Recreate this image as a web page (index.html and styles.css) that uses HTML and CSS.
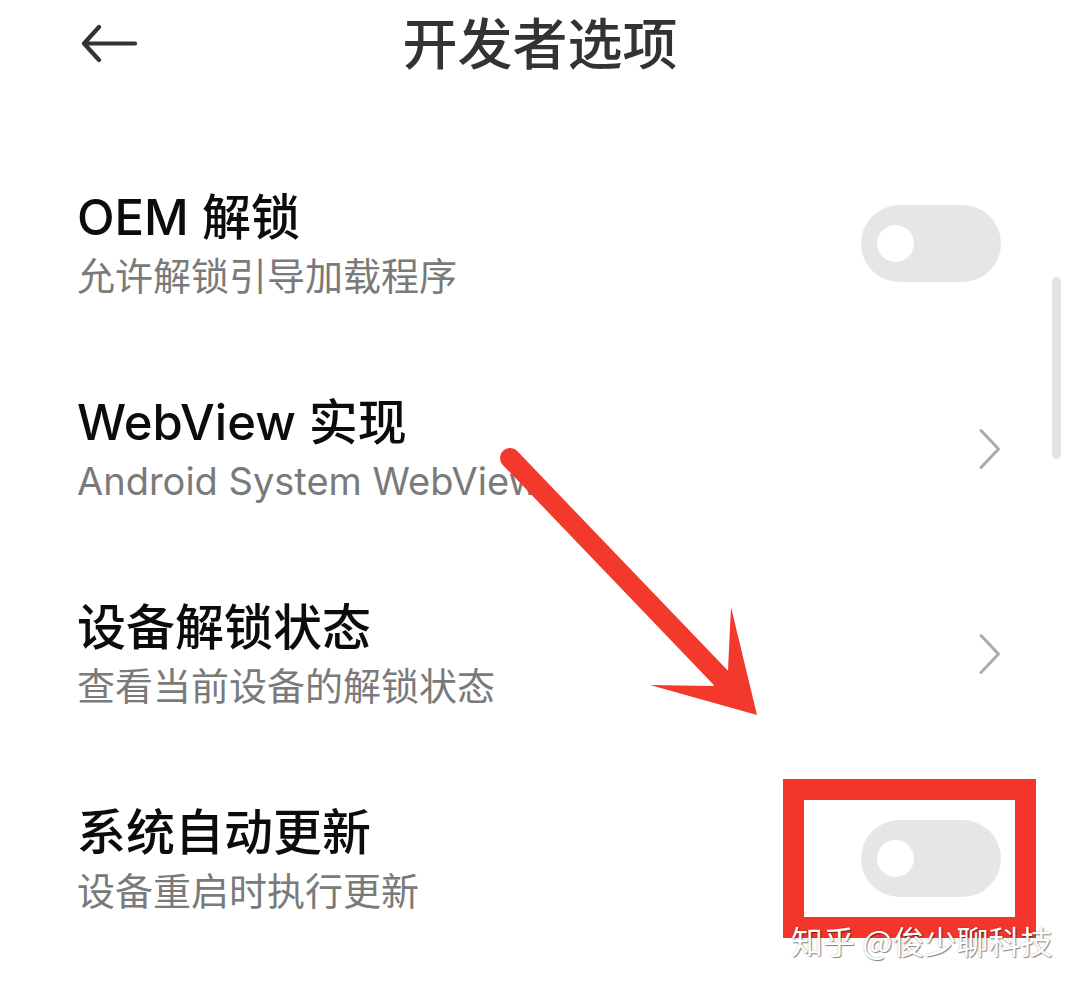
FILE: index.html
```html
<!DOCTYPE html>
<html lang="zh-CN">
<head>
<meta charset="utf-8">
<title>开发者选项</title>
<link rel="stylesheet" href="styles.css">
</head>
<body>
<div class="screen">
  <header class="topbar">
    <div class="topbar-side">
      <button class="back" aria-label="返回">
        <svg width="56" height="40" viewBox="0 0 56 40">
          <path d="M18 3 L3 19.5 L18 36 M3 19.5 H54" fill="none" stroke="#333" stroke-width="4.2" stroke-linecap="round" stroke-linejoin="round"/>
        </svg>
      </button>
    </div>
    <h1 class="topbar-title">开发者选项</h1>
    <div class="topbar-side"></div>
  </header>

  <ul class="settings">
    <li class="row">
      <div class="row-text">
        <div class="row-title">OEM 解锁</div>
        <div class="row-sub">允许解锁引导加载程序</div>
      </div>
      <div class="row-end">
        <span class="switch"><span class="knob"></span></span>
      </div>
    </li>
    <li class="row">
      <div class="row-text">
        <div class="row-title">WebView 实现</div>
        <div class="row-sub">Android System WebView</div>
      </div>
      <div class="row-end">
        <svg class="chevron" width="24" height="42" viewBox="0 0 24 42">
          <path d="M3 2.5 L20.5 21 L3 39.5" fill="none" stroke="#ababab" stroke-width="3" stroke-linecap="round" stroke-linejoin="round"/>
        </svg>
      </div>
    </li>
    <li class="row">
      <div class="row-text">
        <div class="row-title">设备解锁状态</div>
        <div class="row-sub">查看当前设备的解锁状态</div>
      </div>
      <div class="row-end">
        <svg class="chevron" width="24" height="42" viewBox="0 0 24 42">
          <path d="M3 2.5 L20.5 21 L3 39.5" fill="none" stroke="#ababab" stroke-width="3" stroke-linecap="round" stroke-linejoin="round"/>
        </svg>
      </div>
    </li>
    <li class="row">
      <div class="row-text">
        <div class="row-title">系统自动更新</div>
        <div class="row-sub">设备重启时执行更新</div>
      </div>
      <div class="row-end">
        <span class="switch"><span class="knob"></span></span>
      </div>
    </li>
  </ul>

  <div class="scroll-thumb"></div>

  <svg class="marks" width="1080" height="985" viewBox="0 0 1080 985">
    <line x1="510" y1="458" x2="722" y2="679" stroke="#f3382c" stroke-width="20" stroke-linecap="round"/>
    <polygon points="731,607 757,715 650,685 713,686 728,670" fill="#f3382c"/>
    <rect x="793.5" y="789.5" width="232" height="138" fill="none" stroke="#f3352b" stroke-width="21"/>
  </svg>

  <div class="watermark">知乎 @俊少聊科技</div>
</div>
</body>
</html>
```

FILE: styles.css
```css
* {
  box-sizing: border-box;
}

html, body {
  margin: 0;
  padding: 0;
  background: #ffffff;
}

body {
  font-family: "Inter", "Noto Sans CJK SC", "Noto Sans", sans-serif;
}

.screen {
  position: relative;
  width: 1080px;
  height: 985px;
  overflow: hidden;
  background: #ffffff;
}

/* top bar */
.topbar {
  display: grid;
  grid-template-columns: 1fr auto 1fr;
  align-items: center;
  height: 88px;
}

.topbar-side {
  display: flex;
  align-items: center;
}

.back {
  display: flex;
  margin: 0 0 0 81px;
  padding: 0;
  border: 0;
  background: none;
}

.topbar-title {
  margin: 0 0 8px;
  font-family: "Noto Sans CJK SC", sans-serif;
  font-size: 55px;
  font-weight: 500;
  line-height: 80px;
  color: #333333;
}

/* settings list */
.settings {
  list-style: none;
  margin: 0;
  padding: 53px 79px 0 77px;
}

.row {
  display: flex;
  align-items: center;
  justify-content: space-between;
  height: 205px;
}

.row-text {
  display: flex;
  flex-direction: column;
  gap: 8px;
}

.row-title {
  font-size: 49px;
  font-weight: 500;
  line-height: 56px;
  color: #0c0c0c;
}

.row-sub {
  font-size: 38px;
  font-weight: 400;
  line-height: 44px;
  color: #7a7a7a;
}

.row-end {
  display: flex;
  justify-content: flex-end;
  align-items: center;
  width: 140px;
}

.switch {
  display: flex;
  align-items: center;
  width: 140px;
  height: 77px;
  padding-left: 16px;
  border-radius: 39px;
  background: #e6e6e6;
}

.knob {
  width: 37px;
  height: 37px;
  border-radius: 50%;
  background: #ffffff;
}

.chevron {
  display: block;
  margin-right: -1px;
}

/* scroll indicator on the right edge */
.scroll-thumb {
  position: absolute;
  left: 1052px;
  top: 277px;
  width: 9px;
  height: 182px;
  border-radius: 5px;
  background: #e3e3e3;
}

/* red annotation layer */
.marks {
  position: absolute;
  left: 0;
  top: 0;
  pointer-events: none;
}

.watermark {
  position: absolute;
  left: 791px;
  top: 920px;
  font-family: "Noto Sans CJK SC", sans-serif;
  font-size: 32px;
  line-height: 40px;
  color: #ffffff;
  white-space: nowrap;
  text-shadow: 1px 1px 1px rgba(0, 0, 0, 0.45), 0 0 2px rgba(0, 0, 0, 0.25);
}
```
